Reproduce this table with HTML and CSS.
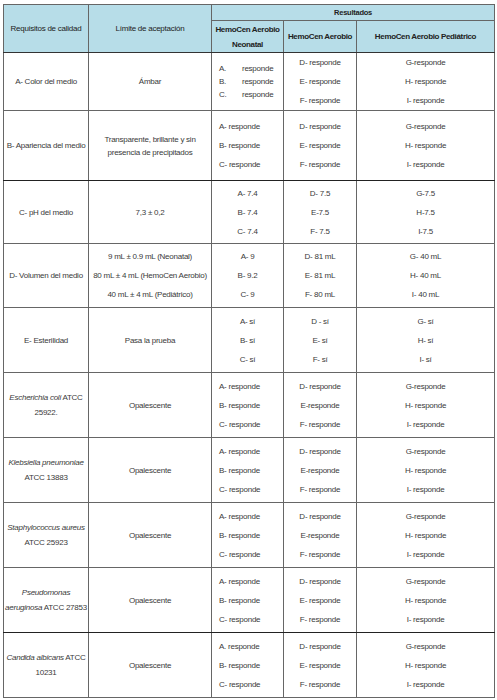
FILE: index.html
```html
<!DOCTYPE html>
<html lang="es">
<head>
<meta charset="utf-8">
<title>Requisitos de calidad</title>
<link rel="stylesheet" href="styles.css">
</head>
<body>
<table class="qt">
  <colgroup>
    <col class="c1"><col class="c2"><col class="c3"><col class="c4"><col class="c5">
  </colgroup>
  <thead>
    <tr class="h1">
      <th rowspan="2">Requisitos de calidad</th>
      <th rowspan="2">Límite de aceptación</th>
      <th colspan="3">Resultados</th>
    </tr>
    <tr class="h2">
      <th>HemoCen Aerobio<br>Neonatal</th>
      <th>HemoCen Aerobio</th>
      <th>HemoCen Aerobio Pediátrico</th>
    </tr>
  </thead>
  <tbody>
    <tr class="r ra">
      <td>A- Color del medio</td>
      <td>Ámbar</td>
      <td class="left"><div class="lst"><span>A.</span><span>responde</span><span>B.</span><span>responde</span><span>C.</span><span>responde</span></div></td>
      <td><div class="l3">D- responde<br>E- responde<br>F- responde</div></td>
      <td><div class="l3">G-responde<br>H- responde<br>I- responde</div></td>
    </tr>
    <tr class="r rb dark">
      <td>B- Apariencia del medio</td>
      <td><div class="l2">Transparente, brillante y sin<br>presencia de precipitados</div></td>
      <td class="left"><div class="l3">A- responde<br>B- responde<br>C- responde</div></td>
      <td><div class="l3">D- responde<br>E- responde<br>F- responde</div></td>
      <td><div class="l3">G-responde<br>H- responde<br>I- responde</div></td>
    </tr>
    <tr class="r rc">
      <td>C- pH del medio</td>
      <td>7,3 ± 0,2</td>
      <td><div class="l3">A- 7.4<br>B- 7.4<br>C- 7.4</div></td>
      <td><div class="l3">D- 7.5<br>E-7.5<br>F- 7.5</div></td>
      <td><div class="l3">G-7.5<br>H-7.5<br>I-7.5</div></td>
    </tr>
    <tr class="r rd">
      <td>D- Volumen del medio</td>
      <td><div class="l3">9 mL ± 0.9 mL (Neonatal)<br>80 mL ± 4 mL (HemoCen Aerobio)<br>40 mL ± 4 mL (Pediátrico)</div></td>
      <td><div class="l3">A- 9<br>B- 9.2<br>C- 9</div></td>
      <td><div class="l3">D- 81 mL<br>E- 81 mL<br>F- 80 mL</div></td>
      <td><div class="l3">G- 40 mL<br>H- 40 mL<br>I- 40 mL</div></td>
    </tr>
    <tr class="r re">
      <td>E- Esterilidad</td>
      <td>Pasa la prueba</td>
      <td><div class="l3">A- sí<br>B- sí<br>C- sí</div></td>
      <td><div class="l3">D - sí<br>E- sí<br>F- sí</div></td>
      <td><div class="l3">G- sí<br>H- sí<br>I- sí</div></td>
    </tr>
    <tr class="r">
      <td><div class="l2b"><i>Escherichia coli</i> ATCC<br>25922.</div></td>
      <td>Opalescente</td>
      <td class="left"><div class="l3">A- responde<br>B- responde<br>C- responde</div></td>
      <td><div class="l3">D- responde<br>E-responde<br>F- responde</div></td>
      <td><div class="l3">G-responde<br>H- responde<br>I- responde</div></td>
    </tr>
    <tr class="r">
      <td><div class="l2b"><i>Klebsiella pneumoniae</i><br>ATCC 13883</div></td>
      <td>Opalescente</td>
      <td class="left"><div class="l3">A- responde<br>B- responde<br>C- responde</div></td>
      <td><div class="l3">D- responde<br>E-responde<br>F- responde</div></td>
      <td><div class="l3">G-responde<br>H- responde<br>I- responde</div></td>
    </tr>
    <tr class="r">
      <td><div class="l2b"><i>Staphylococcus aureus</i><br>ATCC 25923</div></td>
      <td>Opalescente</td>
      <td class="left"><div class="l3">A- responde<br>B- responde<br>C- responde</div></td>
      <td><div class="l3">D- responde<br>E-responde<br>F- responde</div></td>
      <td><div class="l3">G-responde<br>H- responde<br>I- responde</div></td>
    </tr>
    <tr class="r dark">
      <td><div class="l2b"><i>Pseudomonas</i><br><i>aeruginosa</i> ATCC 27853</div></td>
      <td>Opalescente</td>
      <td class="left"><div class="l3">A- responde<br>B- responde<br>C- responde</div></td>
      <td><div class="l3">D- responde<br>E- responde<br>F- responde</div></td>
      <td><div class="l3">G-responde<br>H- responde<br>I- responde</div></td>
    </tr>
    <tr class="r">
      <td><div class="l2b"><i>Candida albicans</i> ATCC<br>10231</div></td>
      <td>Opalescente</td>
      <td class="left"><div class="l3">A. responde<br>B- responde<br>C- responde</div></td>
      <td><div class="l3">D- responde<br>E- responde<br>F- responde</div></td>
      <td><div class="l3">G-responde<br>H- responde<br>I- responde</div></td>
    </tr>
  </tbody>
</table>
</body>
</html>
```
FILE: styles.css
```css
html, body {
  margin: 0;
  padding: 0;
  background: #ffffff;
}
body {
  padding: 4px 3px 0 3px;
  font-family: "Liberation Sans", Arial, sans-serif;
  font-size: 8px;
  letter-spacing: -0.25px;
  color: #3a3a3a;
}
.qt {
  border-collapse: collapse;
  table-layout: fixed;
  width: 491px;
  border: 1px solid #8a8a8a;
}
.c1 { width: 85px; }
.c2 { width: 123px; }
.c3 { width: 72px; }
.c4 { width: 73px; }
.c5 { width: 138px; }
th, td {
  border: 1px solid #666666;
  text-align: center;
  vertical-align: middle;
  padding: 0;
  line-height: 13px;
  white-space: nowrap;
  overflow: hidden;
}
thead th {
  background: #b7dde8;
  color: #222222;
  font-weight: normal;
}
.h1 th[colspan] {
  height: 15px;
  font-weight: bold;
  font-size: 7.5px;
}
.h2 th {
  height: 31px;
  font-weight: bold;
  line-height: 15px;
  letter-spacing: -0.35px;
}
thead tr:last-child th, .h1 th[rowspan] {
  border-bottom: 1px solid #333333;
}
.r td { height: 64px; }
.ra td { height: 57px; }
.rb td { height: 69px; }
.rc td { height: 62px; }
.rd td { height: 63px; }
.dark td { border-bottom: 1px solid #222222; }
td.left { text-align: left; padding-left: 7px; }
.l3 { line-height: 19px; }
.l2 { line-height: 13px; }
.l2b { line-height: 15px; }
.lst {
  display: grid;
  grid-template-columns: 23px auto;
  line-height: 13px;
}
i { font-style: italic; }
```
